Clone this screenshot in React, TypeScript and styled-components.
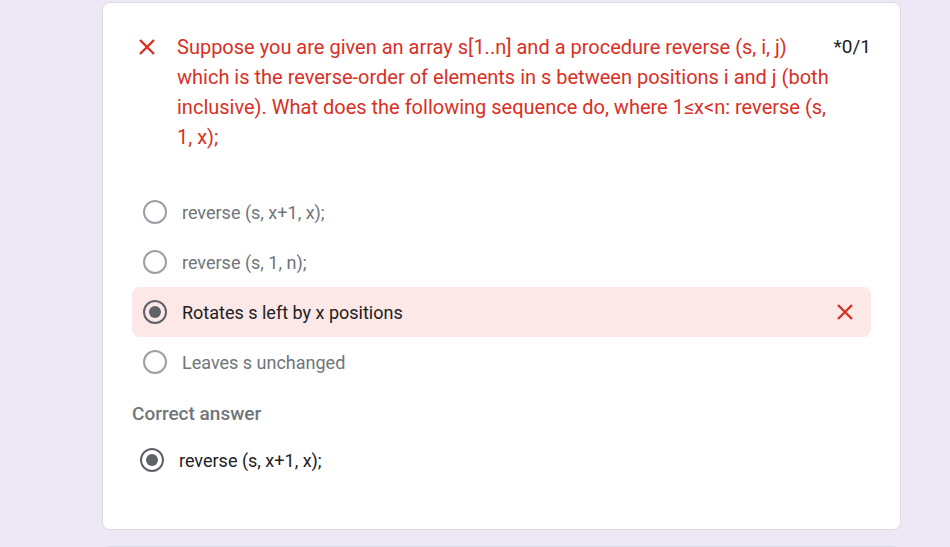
import React from "react";
import styled, { createGlobalStyle } from "styled-components";

const Global = createGlobalStyle`
  html, body { margin: 0; padding: 0; background: #ede7f6; }
  body { font-family: Roboto, "Noto Sans", Arial, sans-serif; }
`;

const Page = styled.div`
  display: flex;
  flex-direction: column;
  align-items: flex-start;
  gap: 16px;
  padding: 2px 0 0 102px;
  height: 547px;
  box-sizing: border-box;
  overflow: hidden;
`;

const Card = styled.div`
  width: 799px;
  box-sizing: border-box;
  background: #fff;
  border: 1px solid #dadce0;
  border-radius: 8px;
  padding: 29px 29px 45px 29px;
  flex-shrink: 0;
`;

const NextCard = styled(Card)`
  height: 40px;
  padding: 0;
`;

const Header = styled.div`
  display: flex;
  align-items: flex-start;
`;

const IconBox = styled.div`
  width: 30px;
  height: 30px;
  display: flex;
  align-items: center;
  justify-content: center;
  flex-shrink: 0;
`;

const QuestionText = styled.div`
  flex: 1;
  margin-left: 15px;
  color: #d93025;
  font-size: 20px;
  line-height: 30px;
`;

const Score = styled.div`
  margin-left: 3px;
  color: #202124;
  font-size: 19px;
  line-height: 30px;
  white-space: nowrap;
`;

const Options = styled.div`
  margin-top: 35px;
  display: flex;
  flex-direction: column;
`;

const Option = styled.div<{ $wrong?: boolean }>`
  height: 50px;
  display: flex;
  align-items: center;
  padding-left: 11px;
  border-radius: 8px;
  background: ${(p) => (p.$wrong ? "#fce8e6" : "transparent")};
`;

const Radio = styled.span<{ $checked?: boolean }>`
  width: 24px;
  height: 24px;
  box-sizing: border-box;
  border-radius: 50%;
  border: 2px solid ${(p) => (p.$checked ? "#5f6368" : "#9aa0a6")};
  display: flex;
  align-items: center;
  justify-content: center;
  flex-shrink: 0;
  &::after {
    content: "";
    display: ${(p) => (p.$checked ? "block" : "none")};
    width: 12px;
    height: 12px;
    border-radius: 50%;
    background: #5f6368;
  }
`;

const OptionLabel = styled.span<{ $dark?: boolean }>`
  margin-left: 15px;
  flex: 1;
  font-size: 18px;
  color: ${(p) => (p.$dark ? "#202124" : "#70757a")};
`;

const WrongMark = styled.div`
  width: 24px;
  height: 24px;
  margin-right: 14px;
  display: flex;
  align-items: center;
  justify-content: center;
`;

const SectionLabel = styled.div`
  margin-top: 15px;
  line-height: 24px;
  font-size: 19px;
  font-weight: 500;
  color: #70757a;
`;

const CorrectRow = styled.div`
  margin-top: 10px;
  height: 48px;
  display: flex;
  align-items: center;
  padding-left: 8px;
`;

const Cross = ({ size = 18 }: { size?: number }) => (
  <svg width={size} height={size} viewBox="0 0 18 18">
    <path d="M2 2 L16 16 M16 2 L2 16" stroke="#d93025" strokeWidth="2.4" strokeLinecap="butt" />
  </svg>
);

const options = [
  "reverse (s, x+1, x);",
  "reverse (s, 1, n);",
  "Rotates s left by x positions",
  "Leaves s unchanged",
];

export default function App() {
  return (
    <>
      <Global />
      <Page>
        <Card>
          <Header>
            <IconBox>
              <Cross />
            </IconBox>
            <QuestionText>
              Suppose you are given an array s[1..n] and a procedure reverse (s, i, j) which is the
              reverse-order of elements in s between positions i and j (both inclusive). What does
              the following sequence do, where 1≤x&lt;n: reverse (s, 1, x);
            </QuestionText>
            <Score>*0/1</Score>
          </Header>
          <Options>
            {options.map((o, i) => {
              const chosen = i === 2;
              return (
                <Option key={o} $wrong={chosen}>
                  <Radio $checked={chosen} />
                  <OptionLabel $dark={chosen}>{o}</OptionLabel>
                  {chosen && (
                    <WrongMark>
                      <Cross />
                    </WrongMark>
                  )}
                </Option>
              );
            })}
          </Options>
          <SectionLabel>Correct answer</SectionLabel>
          <CorrectRow>
            <Radio $checked />
            <OptionLabel $dark>reverse (s, x+1, x);</OptionLabel>
          </CorrectRow>
        </Card>
        <NextCard />
      </Page>
    </>
  );
}
